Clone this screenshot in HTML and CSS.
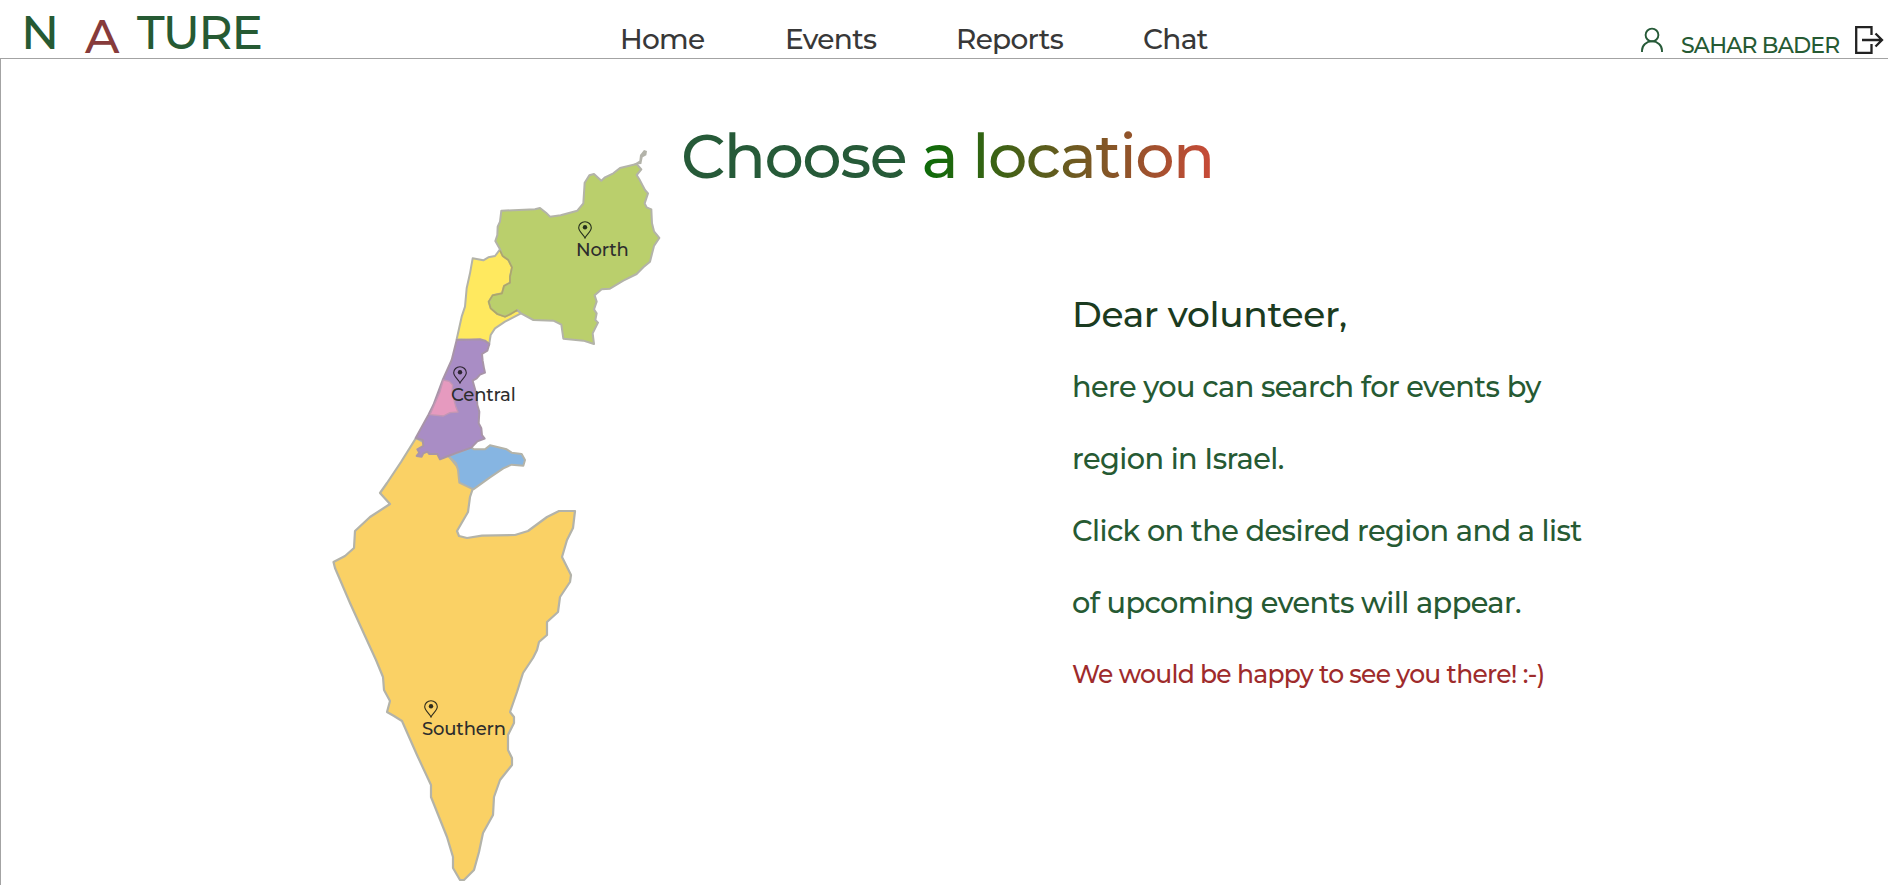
FILE: index.html
```html
<!DOCTYPE html>
<html lang="en">
<head>
<meta charset="utf-8">
<title>Nature - Choose a location</title>
<link rel="stylesheet" href="styles.css">
</head>
<body>
<header class="topbar">
  <div class="logo"><span class="logo-n">N</span><span class="logo-a">A</span><span class="logo-ture">TURE</span></div>
  <nav class="nav">
    <a class="nav-home">Home</a>
    <a class="nav-events">Events</a>
    <a class="nav-reports">Reports</a>
    <a class="nav-chat">Chat</a>
  </nav>
  <div class="account">
    <svg class="icon-user" viewBox="0 0 24 26" fill="none" stroke="#265a38" stroke-width="1.9"><circle cx="12" cy="8" r="6.4"/><path d="M2 25V23.500a10 9.200 0 0 1 20 0V25"/></svg>
    <span class="user-name">SAHAR BADER</span>
    <svg class="icon-exit" viewBox="0 0 30 30" fill="none" stroke="#222" stroke-width="2.300"><path d="M17.500 10V2.200H2.200V27.800H17.500V19"/><path d="M8 15H27M21.500 8.500L28 15L21.500 21.500"/></svg>
  </div>
</header>
<main class="page">
  <h1 class="title"><span class="title-first">Choose</span> <span class="title-rest">a location</span></h1>
  <div class="map">
    <svg class="map-shape" viewBox="320 140 350 745" stroke="#b3b3a9" stroke-width="2.200" stroke-linejoin="round">
      <path fill="#fad165" d="M416 438L401 462 387 483 380 493 390 504 370 517 355 531 354 548 345 556 333.500 562 335 568 350 603 365 636 376 660 383 677 384 690 390 701 387 712 394 716 402 721 417 755 431 785 431 797 447 837 453 857 453 868 460 880 464 880 474 870 479 852 483 833 493 815 494 797 500 780 512 765 512 758 508 750 508 735 514 723 514 717 510 712 517 692 523 673 533 658 537 650 539 642 547 635 547 622 558 612 560 597 570 582 571 575 562 557 567 540 573 528 575 511 559 511 547 517 528 531 515 535 482 535.700 467 538 459 536 457 531 468 512 470 497 473 488 460 470 448 455Z"/>
      <g transform="translate(440 140) scale(.33333)" stroke-width="6">
        <path fill="#ffe95f" d="M180 328L220 340 240 420 232 500 232 510 243 520 195 545 165 565 152 585 147 615 125 602 50 598 65 530 75 500 80 445 90 400 98 355 130 361 145 352 165 348Z"/>
        <path fill="#bacf6c" d="M184 212L285 208 300 204 318 218 330 230 362 226 412 212 430 190 434 128 448 106 462 102 484 122 495 112 520 100 540 84 590 72 604 88 590 105 598 118 615 150 624 160 614 190 620 202 634 208 636 250 642 274 658 294 642 318 630 365 610 382 590 402 550 422 510 446 485 448 464 466 470 485 462 508 470 520 466 540 474 548 458 580 462 612 430 602 370 596 364 554 340 542 280 540 243 520 232 510 212 522 195 530 172 522 152 505 146 485 158 466 186 460 192 438 210 428 210 410 216 382 205 360 188 348 180 328 166 303 172 285 173 260 180 245Z"/>
        <path fill="none" stroke="#ada867" stroke-width="5" d="M232 510L212 522 195 530 172 522 152 505 146 485 158 466 186 460 192 438 210 428 210 410 216 382 205 360 188 348 180 332"/>
        <path fill="#b3b3a9" stroke="none" d="M578 74L598 62 600 45 612 30 621 33 619 46 608 52 604 72Z"/>
      </g>
      <g transform="translate(380 320) scale(.33333)" stroke-width="6">
        <path fill="#86b5e2" d="M205 408L274 383 282 388 315 388 330 376 380 388 395 398 425 402 435 420 430 437 395 434 370 445 330 472 280 508 238 488 234 450 228 430Z"/>
        <path stroke="#a895a8" fill="#a98dc5" d="M230 60L300 58 315 62 328 72 322 92 306 102 308 122 312 145 315 158 300 164 290 175 278 182 290 225 292 255 298 275 296 310 304 325 306 345 314 356 292 364 274 383 225 400 205 408 180 418 172 402 148 402 142 395 130 400 125 410 110 408 118 398 112 388 130 378 128 360 107 354 145 285 160 255 188 180 215 120Z"/>
        <path stroke="#c397b4" fill="#e69abf" stroke-width="4" d="M190 180L208 184 218 195 216 215 222 240 228 262 234 276 210 278 190 288 150 284 165 250 180 215Z"/>
      </g>
    </svg>
    <div class="pin pin-north"><svg class="pin-icon" viewBox="0 0 14 18"><path d="M7 17C5.500 13.500.7 10.500.7 6.800a6.300 6.100 0 0 1 12.600 0C13.300 10.500 8.500 13.500 7 17Z" fill="none" stroke="#26301c" stroke-width="1.100"/><circle cx="7" cy="6.300" r="2.200" fill="#26301c"/></svg><span>North</span></div>
    <div class="pin pin-central"><svg class="pin-icon" viewBox="0 0 14 18"><path d="M7 17C5.500 13.500.7 10.500.7 6.800a6.300 6.100 0 0 1 12.600 0C13.300 10.500 8.500 13.500 7 17Z" fill="none" stroke="#2c2430" stroke-width="1.100"/><circle cx="7" cy="6.300" r="2.200" fill="#2c2430"/></svg><span>Central</span></div>
    <div class="pin pin-southern"><svg class="pin-icon" viewBox="0 0 14 18"><path d="M7 17C5.500 13.500.7 10.500.7 6.800a6.300 6.100 0 0 1 12.600 0C13.300 10.500 8.500 13.500 7 17Z" fill="none" stroke="#302d1c" stroke-width="1.100"/><circle cx="7" cy="6.300" r="2.200" fill="#302d1c"/></svg><span>Southern</span></div>
  </div>
  <section class="intro">
    <p class="greeting">Dear volunteer,</p>
    <p class="line">here you can search for events by</p>
    <p class="line">region in Israel.</p>
    <p class="line">Click on the desired region and a list</p>
    <p class="line">of upcoming events will appear.</p>
    <p class="closing">We would be happy to see you there! :-)</p>
  </section>
</main>
</body>
</html>
```

FILE: styles.css
```css
* { box-sizing: border-box; }
body {
  margin: 0;
  height: 885px;
  overflow: hidden;
  display: flex;
  flex-direction: column;
  background: #fff;
  font-family: Montserrat, Inter, "Open Sans", sans-serif;
  font-weight: 500;
}
h1, p { margin: 0; font-weight: inherit; white-space: nowrap; }
.topbar { height: 58px; display: flex; flex: none; align-items: flex-start; }
.logo { display: flex; width: 620px; padding-left: 21px; font-size: 47px; letter-spacing: -1.3px; line-height: 65px; color: #265a33; }
.logo-n { width: 64px; }
.logo-a { width: 52px; padding-top: 4px; color: #873b3b; }
.nav { display: flex; width: 1020px; font-size: 28px; letter-spacing: -.7px; line-height: 79px; color: #383838; }
.nav-home { width: 165px; }
.nav-events { width: 171px; }
.nav-reports { width: 187px; }
.account { display: flex; align-items: flex-start; }
.icon-user { width: 24px; height: 26px; margin-top: 27px; flex: none; }
.user-name { width: 173px; margin-left: 17px; font-size: 22px; letter-spacing: -.8px; line-height: 92px; color: #265a33; white-space: nowrap; }
.icon-exit { width: 30px; height: 30px; margin-top: 25px; flex: none; }
.page {
  flex: 1;
  min-height: 0;
  display: grid;
  grid-template-columns: 670px 1fr;
  grid-template-rows: 228px 1fr;
  border-top: 1px solid #a3a3a3;
  border-left: 1px solid #a3a3a3;
}
.title { grid-area: 1 / 1 / 2 / 3; padding: 57px 0 0 680px; font-size: 62px; letter-spacing: -1.5px; line-height: 80px; }
.title-first { color: #265a38; }
.title-rest {
  background: linear-gradient(to right, #0a6b08, #c94a38);
  -webkit-background-clip: text;
  background-clip: text;
  color: transparent;
}
.map { grid-area: 1 / 1 / 3 / 2; position: relative; padding: 81px 0 0 319px; }
.map-shape { display: block; width: 350px; height: 745px; }
.pin { position: absolute; display: flex; flex-direction: column; font-size: 18px; letter-spacing: -.15px; line-height: 22px; color: #2d2d2d; }
.pin-icon { width: 14px; height: 18px; margin: 0 0 0 2px; }
.pin-north { left: 575px; top: 162px; }
.pin-central { left: 450px; top: 307px; }
.pin-southern { left: 421px; top: 641px; }
.intro { grid-area: 2 / 2 / 3 / 3; padding-left: 401px; color: #265a33; font-size: 28.800px; letter-spacing: -.57px; line-height: 72px; }
.greeting { font-size: 36px; letter-spacing: -.3px; line-height: 55px; margin-bottom: 9px; color: #1b3b20; }
.closing { font-size: 25px; letter-spacing: -.72px; line-height: 71px; color: #9e2b2b; }
```
